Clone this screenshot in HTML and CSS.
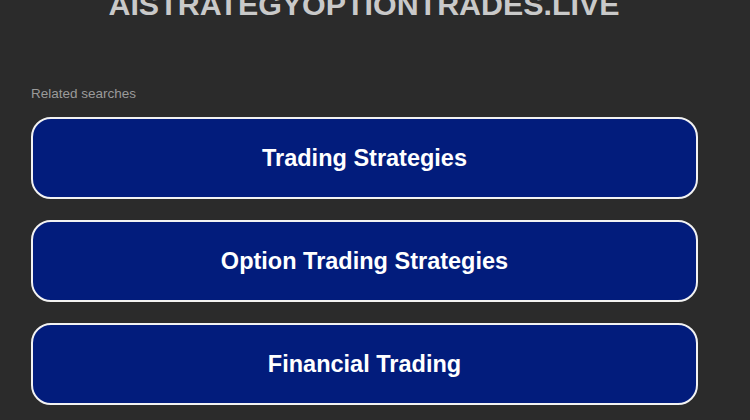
FILE: index.html
```html
<!DOCTYPE html>
<html lang="en">
<head>
    <meta charset="UTF-8">
    <meta name="viewport" content="width=device-width, initial-scale=1.0">
    <title>aistrategyoptiontrades.live</title>
    <link rel="stylesheet" href="styles.css">
</head>
<body>
    <div class="page">
        <h1 class="domain">AISTRATEGYOPTIONTRADES.LIVE</h1>

        <div class="related">
            <div class="related-title">Related searches</div>
            <a class="search-link" href="#">Trading Strategies</a>
            <a class="search-link" href="#">Option Trading Strategies</a>
            <a class="search-link" href="#">Financial Trading</a>
        </div>
    </div>
</body>
</html>
```

FILE: styles.css
```css
html, body {
    margin: 0;
    padding: 0;
}
body {
    background: #2b2b2b;
    font-family: "Liberation Sans", Arial, sans-serif;
    overflow: hidden;
}
.page {
    width: 750px;
    height: 420px;
}
.domain {
    margin: -12px 0 0;
    padding-right: 22px;
    text-align: center;
    color: #c9c9c9;
    font-size: 30.4px;
    font-weight: bold;
    line-height: 32px;
}
.related {
    padding: 66px 52px 0 31px;
    display: flex;
    flex-direction: column;
    gap: 21px;
}
.related-title {
    color: #9a9a9a;
    font-size: 13.5px;
    line-height: 16px;
    margin-bottom: -6px;
}
.search-link {
    display: flex;
    align-items: center;
    justify-content: center;
    height: 78px;
    background: #021c7c;
    border: 2px solid #f2f2f2;
    border-radius: 20px;
    color: #ffffff;
    font-size: 23.5px;
    font-weight: bold;
    text-decoration: none;
}
```
